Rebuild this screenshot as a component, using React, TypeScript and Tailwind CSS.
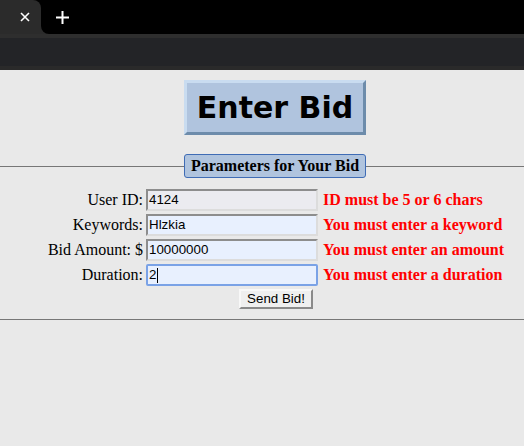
import type { ReactNode } from 'react'

const serif = { fontFamily: '"Liberation Serif", "Times New Roman", serif' }
const sans = { fontFamily: '"Liberation Sans", Arial, sans-serif' }

interface Row {
  label: string
  value: string
  error: string
  autofill?: boolean
  focused?: boolean
}

const rows: Row[] = [
  { label: 'User ID:', value: '4124', error: 'ID must be 5 or 6 chars' },
  { label: 'Keywords:', value: 'Hlzkia', error: 'You must enter a keyword', autofill: true },
  { label: 'Bid Amount: $', value: '10000000', error: 'You must enter an amount', autofill: true },
  { label: 'Duration:', value: '2', error: 'You must enter a duration', autofill: true, focused: true },
]

function BrowserChrome() {
  return (
    <div className="bg-black">
      {/* Tab strip */}
      <div className="flex h-[34px]">
        <div className="flex w-[41px] items-center justify-center rounded-tr-[8px] bg-[#2b2b2b]">
          <svg width="10" height="10" viewBox="0 0 10 10" className="ml-[8px]">
            <path d="M1 1 L9 9 M9 1 L1 9" stroke="#fff" strokeWidth="1.6" />
          </svg>
        </div>
        <div className="flex-1 bg-[#2b2b2b]">
          <div className="flex h-full items-center rounded-bl-[8px] bg-black pl-[15px]">
            <svg width="13" height="13" viewBox="0 0 13 13">
              <path d="M6.5 0 V13 M0 6.5 H13" stroke="#fff" strokeWidth="2" />
            </svg>
          </div>
        </div>
      </div>
      {/* Toolbar */}
      <div className="h-[4px] bg-[#2e2e2e]" />
      <div className="h-[28px] bg-[#232427]" />
      <div className="h-[4px] bg-[#2a2a2a]" />
    </div>
  )
}

function Field({ row }: { row: Row }) {
  const base = 'flex h-[22px] w-[172px] items-center px-[1px] text-[13.33px] text-black'
  const look = row.focused
    ? 'rounded-[2px] border-2 border-[#7aa2e6] bg-[#e8f0fe]'
    : `border-2 border-t-[#8d8d8d] border-l-[#8d8d8d] border-r-[#dcdcdc] border-b-[#dcdcdc] ${
        row.autofill ? 'bg-[#e8f0fe]' : 'bg-[#ebebf0]'
      }`
  return (
    <div className={`${base} ${look}`} style={sans}>
      <span>{row.value}</span>
      {row.focused && <span className="ml-px h-[15px] w-px bg-black" />}
    </div>
  )
}

function Button({ children }: { children: ReactNode }) {
  return (
    <button
      type="button"
      className="h-[20px] w-[74px] border-2 border-t-[#f8f8f8] border-l-[#f8f8f8] border-r-[#8a8a8a] border-b-[#8a8a8a] bg-[#efefef] text-[13.33px] leading-none text-black"
      style={sans}
    >
      {children}
    </button>
  )
}

export default function App() {
  return (
    <div className="min-h-[446px] bg-[#e9e9e9]">
      <BrowserChrome />

      {/* Heading */}
      <div className="flex justify-center pl-[26px] pt-[10px]">
        <h1
          className="flex h-[55px] w-[182px] items-center justify-center border-[3px] border-t-[#c9dcf0] border-l-[#c9dcf0] border-r-[#6d8cab] border-b-[#6d8cab] bg-[#b0c4de] text-[30px] font-bold leading-none text-black"
          style={{ fontFamily: '"DejaVu Sans", Verdana, sans-serif' }}
        >
          Enter Bid
        </h1>
      </div>

      {/* Form */}
      <fieldset className="mt-[19px] border-x-0 border-y border-[#777] pb-[10px]">
        <legend
          className="ml-[184px] flex h-[24px] w-[182px] items-center justify-center rounded-[3px] border border-[#3f6cb5] bg-[#b0c4de] text-[16px] font-bold text-black"
          style={serif}
        >
          Parameters for Your Bid
        </legend>

        <div className="flex justify-center pl-[28px] pt-[11px]">
          <div className="grid grid-cols-[auto_172px_auto] items-center gap-x-[3px] gap-y-[3px]">
            {rows.map((row) => (
              <div key={row.label} className="contents">
                <span className="text-right text-[16px] leading-[22px] text-black" style={serif}>
                  {row.label}
                </span>
                <Field row={row} />
                <span
                  className="pl-[2px] text-[16px] font-bold leading-[22px] text-[#ff0000]"
                  style={serif}
                >
                  {row.error}
                </span>
              </div>
            ))}
            <div className="col-span-3 flex justify-center">
              <Button>Send Bid!</Button>
            </div>
          </div>
        </div>
      </fieldset>
    </div>
  )
}
